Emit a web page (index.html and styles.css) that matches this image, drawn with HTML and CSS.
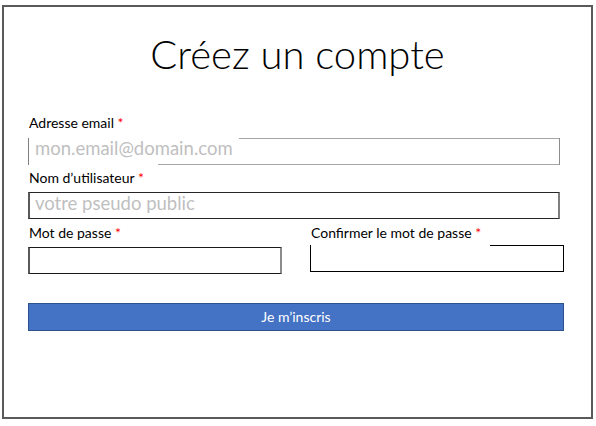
FILE: index.html
```html
<!DOCTYPE html>
<html lang="fr">
<head>
<meta charset="utf-8">
<title>Créez un compte</title>
<link rel="stylesheet" href="styles.css">
</head>
<body>
<div class="frame">
  <h1 class="title">Créez un compte</h1>
  <form class="form">
    <label class="label label-email">Adresse email <span class="req">*</span></label>
    <div class="box box-email"><span class="ph">mon.email@domain.com</span></div>
    <label class="label label-user">Nom d’utilisateur <span class="req">*</span></label>
    <div class="box box-user"><span class="ph">votre pseudo public</span></div>
    <div class="pw-row">
      <div class="col">
        <label class="label label-pw">Mot de passe <span class="req">*</span></label>
        <div class="box box-pw"></div>
      </div>
      <div class="col">
        <label class="label label-confirm">Confirmer le mot de passe <span class="req">*</span></label>
        <div class="box box-confirm"></div>
      </div>
    </div>
    <div class="btn">Je m’inscris</div>
  </form>
</div>
</body>
</html>
```
FILE: styles.css
```css
html, body {
  margin: 0;
  padding: 0;
  background: #ffffff;
}
body {
  font-family: Lato, "Liberation Sans", sans-serif;
  color: #000;
}
.frame {
  box-sizing: border-box;
  margin: 5px 0 0 2px;
  width: 591px;
  height: 414px;
  border: 2px solid #5a5a5a;
  padding: 0 0 0 24px;
}
.title {
  margin: 23px 0 0 -24px;
  font-size: 40px;
  font-weight: 300;
  line-height: 48px;
  text-align: center;
}
.form {
  display: flex;
  flex-direction: column;
  width: 536px;
  margin-top: 36px;
}
.label {
  display: block;
  font-size: 14px;
  line-height: 17px;
  padding-left: 1px;
}
.req {
  color: #ff0000;
}
.label-email { margin-bottom: 7px; }
.label-user { margin-top: 4px; margin-bottom: 6px; }
.label-pw { margin-bottom: 6px; }
.label-confirm { margin-bottom: 4px; }
.box {
  box-sizing: border-box;
  height: 27px;
  padding-left: 6px;
}
.ph {
  font-size: 18.5px;
  line-height: 19px;
  color: #bfbfbf;
}
.box-email {
  width: 532px;
  border-left: 1px solid #7f7f7f;
  border-right: 1px solid #8c8c8c;
  background:
    linear-gradient(#a6a6a6, #a6a6a6) right top / calc(100% - 210px) 1px no-repeat,
    linear-gradient(#a6a6a6, #a6a6a6) right bottom / calc(100% - 129px) 1px no-repeat;
  padding-top: 1px;
}
.box-user {
  width: 532px;
  border: 1px solid #262626;
  border-left: 2px solid #595959;
  border-right: 2px solid #7f7f7f;
  padding-left: 5px;
  padding-top: 1px;
}
.pw-row {
  display: grid;
  grid-template-columns: 254px 254px;
  column-gap: 28px;
  margin-top: 5px;
}
.box-pw {
  border: 1px solid #1a1a1a;
  border-left: 2px solid #595959;
  border-right: 2px solid #8c8c8c;
}
.box-confirm {
  border: 1px solid #000;
  border-top: none;
  background: linear-gradient(#000, #000) right top / calc(100% - 179px) 1px no-repeat;
}
.btn {
  box-sizing: border-box;
  margin-top: 29px;
  width: 536px;
  height: 28px;
  background: #4472c4;
  border: 1px solid #2f528f;
  color: #ffffff;
  font-size: 14px;
  line-height: 26px;
  text-align: center;
}
```
